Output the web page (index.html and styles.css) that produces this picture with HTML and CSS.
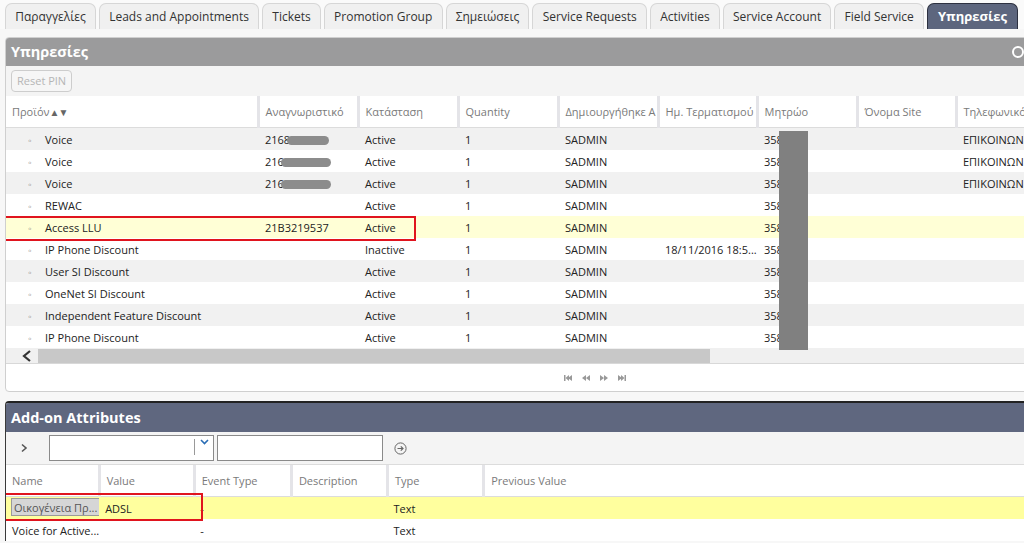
FILE: index.html
```html
<!DOCTYPE html>
<html>
<head>
<meta charset="utf-8">
<link rel="stylesheet" href="styles.css">
</head>
<body>
<div class="tabs">
  <div class="tab">Παραγγελίες</div>
  <div class="tab">Leads and Appointments</div>
  <div class="tab">Tickets</div>
  <div class="tab">Promotion Group</div>
  <div class="tab">Σημειώσεις</div>
  <div class="tab">Service Requests</div>
  <div class="tab">Activities</div>
  <div class="tab">Service Account</div>
  <div class="tab">Field Service</div>
  <div class="tab active">Υπηρεσίες</div>
</div>

<div class="panel p1">
  <div class="phead">Υπηρεσίες<span class="hicon"></span></div>
  <div class="ptool"><span class="btn">Reset PIN</span></div>
  <table class="grid g1">
    <colgroup>
      <col style="width:252px"><col style="width:100px"><col style="width:100px"><col style="width:100px"><col style="width:100px"><col style="width:99px"><col style="width:100px"><col style="width:99px"><col style="width:120px">
    </colgroup>
    <thead>
      <tr><th>Προϊόν<span class="sort">▲▼</span></th><th>Αναγνωριστικό</th><th>Κατάσταση</th><th>Quantity</th><th>Δημιουργήθηκε Α</th><th>Ημ. Τερματισμού</th><th>Μητρώο</th><th>Όνομα Site</th><th>Τηλεφωνικό</th></tr>
    </thead>
    <tbody>
      <tr class="alt"><td><span class="dot">◦</span>Voice</td><td>2168<span class="blur b1"></span></td><td>Active</td><td>1</td><td>SADMIN</td><td></td><td>358</td><td></td><td>ΕΠΙΚΟΙΝΩΝΙΕΣ</td></tr>
      <tr><td><span class="dot">◦</span>Voice</td><td>216<span class="blur b2"></span></td><td>Active</td><td>1</td><td>SADMIN</td><td></td><td>358</td><td></td><td>ΕΠΙΚΟΙΝΩΝΙΕΣ</td></tr>
      <tr class="alt"><td><span class="dot">◦</span>Voice</td><td>216<span class="blur b2"></span></td><td>Active</td><td>1</td><td>SADMIN</td><td></td><td>358</td><td></td><td>ΕΠΙΚΟΙΝΩΝΙΕΣ</td></tr>
      <tr><td><span class="dot">◦</span>REWAC</td><td></td><td>Active</td><td>1</td><td>SADMIN</td><td></td><td>358</td><td></td><td></td></tr>
      <tr class="sel"><td><span class="dot">◦</span>Access LLU</td><td>21B3219537</td><td>Active</td><td>1</td><td>SADMIN</td><td></td><td>358</td><td></td><td></td></tr>
      <tr><td><span class="dot">◦</span>IP Phone Discount</td><td></td><td>Inactive</td><td>1</td><td>SADMIN</td><td>18/11/2016 18:5...</td><td>358</td><td></td><td></td></tr>
      <tr class="alt"><td><span class="dot">◦</span>User SI Discount</td><td></td><td>Active</td><td>1</td><td>SADMIN</td><td></td><td>358</td><td></td><td></td></tr>
      <tr><td><span class="dot">◦</span>OneNet SI Discount</td><td></td><td>Active</td><td>1</td><td>SADMIN</td><td></td><td>358</td><td></td><td></td></tr>
      <tr class="alt"><td><span class="dot">◦</span>Independent Feature Discount</td><td></td><td>Active</td><td>1</td><td>SADMIN</td><td></td><td>358</td><td></td><td></td></tr>
      <tr><td><span class="dot">◦</span>IP Phone Discount</td><td></td><td>Active</td><td>1</td><td>SADMIN</td><td></td><td>358</td><td></td><td></td></tr>
    </tbody>
  </table>
  <div class="hscroll">
    <span class="larrow"><svg width="10" height="12" viewBox="0 0 10 12"><path d="M8 1 L2 6 L8 11" fill="none" stroke="#333" stroke-width="2.2"/></svg></span>
    <div class="thumb"></div>
  </div>
  <div class="pager">
    <svg width="8" height="8" viewBox="0 0 8 8"><rect x="0" y="1" width="1.5" height="6" fill="#999"/><path d="M8 1 L4 4 L8 7Z M5 1 L1.5 4 L5 7Z" fill="#999"/></svg>
    <svg width="8" height="8" viewBox="0 0 8 8"><path d="M4 1 L0 4 L4 7Z M8 1 L4 4 L8 7Z" fill="#999"/></svg>
    <svg width="8" height="8" viewBox="0 0 8 8"><path d="M0 1 L4 4 L0 7Z M4 1 L8 4 L4 7Z" fill="#999"/></svg>
    <svg width="8" height="8" viewBox="0 0 8 8"><path d="M0 1 L4 4 L0 7Z M3 1 L6.5 4 L3 7Z" fill="#999"/><rect x="6.5" y="1" width="1.5" height="6" fill="#999"/></svg>
  </div>
  <div class="redact"></div>
  <div class="mark m1"></div>
</div>

<div class="panel p2">
  <div class="phead dark">Add-on Attributes</div>
  <div class="ptool t2">
    <span class="chev"><svg width="8" height="10" viewBox="0 0 8 10"><path d="M2 1.5 L6 5 L2 8.5" fill="none" stroke="#555" stroke-width="1.6"/></svg></span>
    <div class="sel-box"><span class="dd"><svg width="9" height="6" viewBox="0 0 9 6"><path d="M1 1 L4.5 4.5 L8 1" fill="none" stroke="#2a6db5" stroke-width="1.6"/></svg></span></div>
    <div class="inp"></div>
    <span class="go"><svg width="13" height="13" viewBox="0 0 13 13"><circle cx="6.5" cy="6.5" r="5.6" fill="none" stroke="#666" stroke-width="1"/><path d="M3.5 6.5 H9 M6.8 4.3 L9 6.5 L6.8 8.7" fill="none" stroke="#666" stroke-width="1.2"/></svg></span>
  </div>
  <table class="grid g2">
    <colgroup>
      <col style="width:93px"><col style="width:95px"><col style="width:97px"><col style="width:96px"><col style="width:96px"><col style="width:560px">
    </colgroup>
    <thead>
      <tr><th>Name</th><th>Value</th><th>Event Type</th><th>Description</th><th>Type</th><th>Previous Value</th></tr>
    </thead>
    <tbody>
      <tr class="sel2"><td class="namecell"><span class="namebtn">Οικογένεια Πρ...</span></td><td>ADSL</td><td>-</td><td></td><td>Text</td><td></td></tr>
      <tr><td>Voice for Active...</td><td></td><td>-</td><td></td><td>Text</td><td></td></tr>
    </tbody>
  </table>
  <div class="mark m2"></div>
</div>
</body>
</html>
```

FILE: styles.css
```css
html, body {
  margin: 0;
  padding: 0;
  width: 1024px;
  height: 543px;
  overflow: hidden;
  background: #f7f7f7;
  font-family: "Open Sans", "Noto Sans", sans-serif;
  font-size: 11px;
  color: #222;
}

.tabs {
  display: flex;
  gap: 3px;
  padding: 3px 0 0 5px;
  height: 26px;
  background: #fafafa;
}
.tab {
  height: 25px;
  line-height: 25px;
  padding: 0 9.2px;
  border: 1px solid #d6d6d6;
  border-bottom: none;
  border-radius: 7px 7px 0 0;
  background: #f0f0f0;
  font-size: 12px;
  color: #333;
  white-space: nowrap;
}
.tab.active {
  background: #5d667e;
  border-color: #2d3140;
  color: #fff;
  font-weight: bold;
  font-size: 13px;
  padding: 0 10px;
}

.panel {
  position: relative;
  width: 1040px;
  margin-left: 5px;
  background: #fff;
  overflow: hidden;
}
.p1 {
  margin-top: 8px;
  border: 1px solid #cfcfcf;
  border-radius: 4px;
}
.p2 {
  margin-top: 9px;
  border: 1px solid #3a3a3a;
  border-top: 2px solid #222;
  border-radius: 4px 0 0 0;
  border-bottom: none;
}

.phead {
  height: 28px;
  line-height: 28px;
  padding-left: 5px;
  background: #9b9b9c;
  color: #fff;
  font-weight: bold;
  font-size: 14.5px;
  position: relative;
}
.phead.dark {
  background: #5f677f;
  height: 29px;
  line-height: 29px;
}
.hicon {
  position: absolute;
  left: 1006px;
  top: 8px;
  width: 8px;
  height: 8px;
  border: 2.5px solid #fff;
  border-radius: 50%;
}

.ptool {
  height: 30px;
  background: #f4f4f4;
  display: flex;
  align-items: center;
  padding-left: 5px;
}
.btn {
  display: inline-block;
  height: 20px;
  line-height: 20px;
  padding: 0 5px;
  border: 1px solid #cdcdcd;
  border-radius: 4px;
  color: #b5b5b5;
  font-size: 11px;
  background: #f6f6f6;
}

.grid {
  border-collapse: collapse;
  table-layout: fixed;
  width: 1040px;
}
.grid th {
  height: 31px;
  text-align: left;
  font-weight: normal;
  color: #7a7a7a;
  font-size: 11px;
  padding: 0 0 0 6px;
  border-right: 3px solid #e4e4e8;
  border-bottom: 1px solid #dcdcdc;
  white-space: nowrap;
  overflow: hidden;
  background: #fff;
}
.grid td {
  height: 22px;
  padding: 0 0 0 7px;
  white-space: nowrap;
  overflow: hidden;
  font-size: 11px;
  color: #222;
}
.grid tr.alt td { background: #f1f1f1; }
.grid tr.sel td { background: #ffffd6; }
.sort { font-size: 10px; color: #666; letter-spacing: -1px; }
.dot {
  display: inline-block;
  width: 32px;
  padding-left: 15px;
  box-sizing: border-box;
  color: #888;
  font-size: 10px;
}
.blur {
  display: inline-block;
  height: 9px;
  background: #8c8c8c;
  border-radius: 5px;
  vertical-align: -1px;
}
.b1 { width: 42px; margin-left: -3px; }
.b2 { width: 50px; margin-left: -3px; }

.hscroll {
  display: flex;
  align-items: center;
  height: 15px;
  background: #f0f0f0;
  border-bottom: 1px solid #d8d8d8;
}
.larrow { width: 32px; padding-left: 16px; box-sizing: border-box; display: flex; }
.thumb { width: 672px; height: 14px; background: #c8c8c8; }

.pager {
  height: 27px;
  display: flex;
  align-items: center;
  gap: 10px;
  padding-left: 558px;
}

.redact {
  position: absolute;
  left: 773px;
  top: 93px;
  width: 29px;
  height: 219px;
  background: #808080;
}
.mark {
  position: absolute;
  border: 2px solid #e0141e;
}
.m1 { left: -3px; top: 178px; width: 409px; height: 21px; }
.m2 { left: -3px; top: 90px; width: 196px; height: 24px; }

.t2 {
  height: 32px;
  gap: 0;
  padding-left: 0;
  border-bottom: 1px solid #dcdcdc;
}
.chev { width: 43px; display: flex; padding-left: 14px; box-sizing: border-box; }
.sel-box {
  position: relative;
  width: 163px;
  height: 24px;
  border: 1px solid #8a8a8a;
  background: #fff;
}
.dd {
  position: absolute;
  right: 0;
  top: 3px;
  width: 18px;
  height: 16px;
  border-left: 1px solid #999;
  display: flex;
  justify-content: center;
  align-items: flex-start;
}
.inp {
  width: 164px;
  height: 24px;
  margin-left: 3px;
  border: 1px solid #8a8a8a;
  background: #fff;
}
.go { margin-left: 11px; display: flex; }

.g2 th { height: 31px; }
.g2 td { padding-left: 6px; }
.g2 tr.sel2 td { background: #ffff9e; }
.g2 td.namecell { padding-left: 5px; }
.namebtn {
  display: inline-block;
  height: 18px;
  line-height: 18px;
  width: 90px;
  padding-left: 2px;
  box-sizing: border-box;
  background: #d6d6d6;
  border: 1px solid #9a9a9a;
  color: #555;
  overflow: hidden;
}
```
